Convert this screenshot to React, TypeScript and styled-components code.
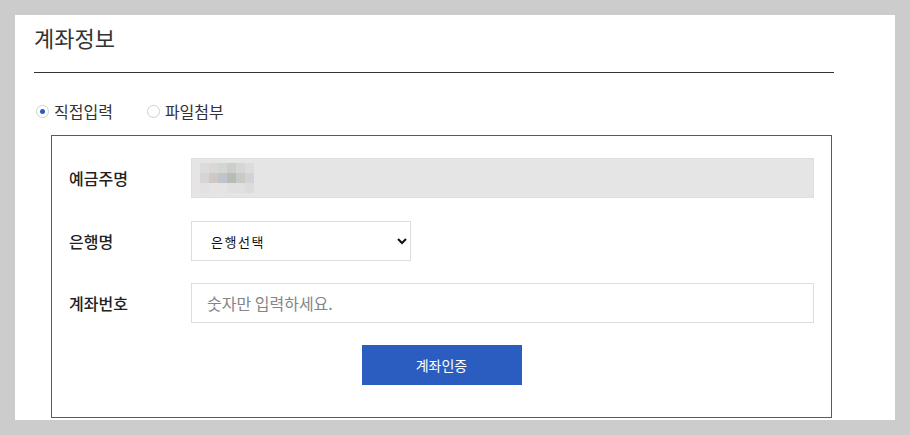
import React, { useState } from 'react';
import styled, { createGlobalStyle } from 'styled-components';

const GlobalStyle = createGlobalStyle`
  * {
    box-sizing: border-box;
  }
  body {
    margin: 0;
    background: #cccccc;
    font-family: "Noto Sans CJK KR", "Noto Sans", sans-serif;
    color: #222;
  }
`;

const Page = styled.div`
  padding: 15px 15px 0;
  height: 435px;
  overflow: hidden;
`;

const Panel = styled.section`
  background: #fff;
  height: 405px;
  padding: 6px 61px 0 19px;
`;

const Title = styled.h2`
  margin: 0;
  font-size: 22px;
  font-weight: 400;
  line-height: 32px;
  color: #333;
  padding-bottom: 19px;
  border-bottom: 1px solid #333;
`;

const RadioRow = styled.div`
  display: flex;
  align-items: center;
  gap: 34px;
  margin: 28px 0 14px 2px;
  height: 20px;
`;

const RadioLabel = styled.label`
  display: flex;
  align-items: center;
  gap: 5px;
  font-size: 16px;
  line-height: 20px;
  color: #333;
  cursor: pointer;
`;

const RadioDot = styled.span<{ $checked: boolean }>`
  width: 13px;
  height: 13px;
  border-radius: 50%;
  border: 1px solid #d0d0d0;
  background: #fff;
  display: flex;
  align-items: center;
  justify-content: center;
  &::after {
    content: '';
    width: 5px;
    height: 5px;
    border-radius: 50%;
    background: ${(p) => (p.$checked ? '#2a5dbf' : 'transparent')};
  }
`;

const FormBox = styled.div`
  width: 781px;
  margin-left: 17px;
  border: 1px solid #2a5fc4;
  padding: 22px 17px 32px;
  display: flex;
  flex-direction: column;
  gap: 22px;
`;

const Row = styled.div<{ $extra?: number }>`
  display: flex;
  align-items: center;
  height: 40px;
  margin-bottom: ${(p) => p.$extra ?? 0}px;
`;

const Label = styled.span`
  width: 122px;
  flex-shrink: 0;
  font-size: 16px;
  font-weight: 500;
  color: #222;
`;

const ReadonlyField = styled.div`
  width: 623px;
  height: 40px;
  background: #e5e5e5;
  border: 1px solid #dedede;
  padding-left: 8px;
  display: flex;
  align-items: center;
`;

const Mosaic = styled.div`
  display: grid;
  grid-template-columns: repeat(6, 9px);
  grid-auto-rows: 10px;
`;

const Cell = styled.span<{ $c: string }>`
  background: ${(p) => p.$c};
`;

const Select = styled.select`
  width: 220px;
  height: 40px;
  border: 1px solid #dddddd;
  background: #fff;
  padding: 0 11px 0 15px;
  font-family: "Noto Sans CJK KR", sans-serif;
  font-size: 13px;
  letter-spacing: 1.5px;
  color: #111;
  outline: none;
`;

const TextInput = styled.input`
  width: 623px;
  height: 40px;
  border: 1px solid #dddddd;
  padding: 0 15px;
  font-family: "Noto Sans CJK KR", sans-serif;
  font-size: 16px;
  color: #333;
  outline: none;
  &::placeholder {
    color: #858585;
  }
`;

const ButtonRow = styled.div`
  display: flex;
  justify-content: center;
`;

const SubmitButton = styled.button`
  width: 160px;
  height: 40px;
  border: none;
  background: #2a5dbf;
  color: #fff;
  font-family: "Noto Sans CJK KR", sans-serif;
  font-size: 14px;
  cursor: pointer;
`;

const mosaicColors = [
  '#dcdcdc', '#d8d8d4', '#d4d6d2', '#cccecb', '#d6d6d6', '#dcdcdc',
  '#d8d4d4', '#d0c8c4', '#c0c4cc', '#b8bcb4', '#c8cac6', '#d4d2d8',
  '#e2e2e2', '#e6e4e2', '#e4e4e4', '#e0e0e0', '#e0e0e0', '#dcdcdc',
];

function App(): JSX.Element {
  const [mode, setMode] = useState<'direct' | 'file'>('direct');
  const [account, setAccount] = useState('');

  return (
    <Page>
      <GlobalStyle />
      <Panel>
        <Title>계좌정보</Title>
        <RadioRow>
          <RadioLabel onClick={() => setMode('direct')}>
            <RadioDot $checked={mode === 'direct'} />
            직접입력
          </RadioLabel>
          <RadioLabel onClick={() => setMode('file')}>
            <RadioDot $checked={mode === 'file'} />
            파일첨부
          </RadioLabel>
        </RadioRow>
        <FormBox>
          <Row $extra={1}>
            <Label>예금주명</Label>
            <ReadonlyField>
              <Mosaic>
                {mosaicColors.map((c, i) => <Cell key={i} $c={c} />)}
              </Mosaic>
            </ReadonlyField>
          </Row>
          <Row>
            <Label>은행명</Label>
            <Select defaultValue="">
              <option value="">은행선택</option>
              <option value="kb">국민은행</option>
              <option value="shinhan">신한은행</option>
            </Select>
          </Row>
          <Row>
            <Label>계좌번호</Label>
            <TextInput
              placeholder="숫자만 입력하세요."
              value={account}
              onChange={(e) => setAccount(e.target.value.replace(/\D/g, ''))}
            />
          </Row>
          <ButtonRow>
            <SubmitButton type="button">계좌인증</SubmitButton>
          </ButtonRow>
        </FormBox>
      </Panel>
    </Page>
  );
}

export default App;
